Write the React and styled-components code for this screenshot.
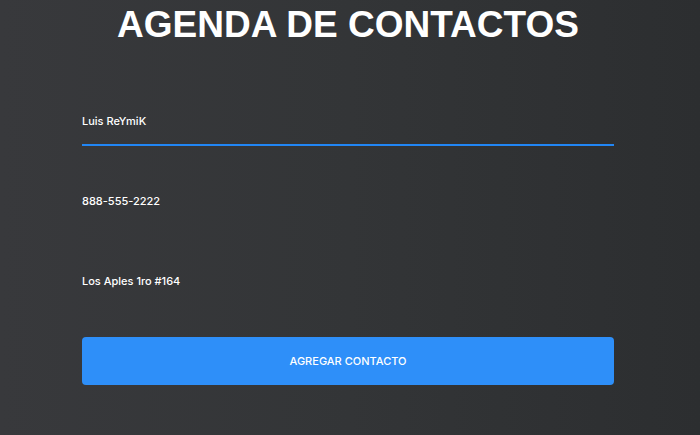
import React, { useState } from 'react'
import styled, { createGlobalStyle } from 'styled-components'

// #region STYLES
const GlobalStyle = createGlobalStyle`
  html, body {
    margin: 0;
    padding: 0;
    height: 100%;
  }
  body {
    background: linear-gradient(90deg, #38393c 0%, #333537 50%, #2c2e30 100%);
    font-family: Inter, "Noto Sans", sans-serif;
    color: #ffffff;
  }
`
const Page = styled.div`
  min-height: 435px;
  padding: 0 4px 0 0;
  box-sizing: border-box;
`
const Title = styled.h1`
  margin: 2px 0 0;
  text-align: center;
  font-family: "Liberation Sans", Arial, sans-serif;
  font-size: 37px;
  line-height: 46px;
  font-weight: 700;
  color: #ffffff;
`
const Form = styled.form`
  width: 532px;
  margin: 50px auto 0;
  display: flex;
  flex-direction: column;
  gap: 32px;
`
const Field = styled.input`
  height: 48px;
  box-sizing: border-box;
  padding: 0;
  background: transparent;
  border: 0;
  border-bottom: 2px solid ${({ $active }) => ($active ? '#2186f5' : 'transparent')};
  outline: none;
  font-family: Inter, "Noto Sans", sans-serif;
  font-size: 11px;
  font-weight: 500;
  color: #ffffff;
`
const SubmitBtn = styled.button`
  margin-top: -1px;
  height: 48px;
  border: 0;
  border-radius: 4px;
  background-color: #2e8ff9;
  font-family: Inter, "Noto Sans", sans-serif;
  font-size: 11px;
  font-weight: 500;
  color: #ffffff;
  text-transform: uppercase;
  cursor: pointer;
`
// #endregion

export default function App() {
  const [name, setName] = useState('Luis ReYmiK')
  const [phone, setPhone] = useState('888-555-2222')
  const [address, setAddress] = useState('Los Aples 1ro #164')

  const handleSubmit = (e) => {
    e.preventDefault()
  }

  return (
    <Page>
      <GlobalStyle />
      <Title>AGENDA DE CONTACTOS</Title>
      <Form onSubmit={handleSubmit}>
        <Field $active value={name} onChange={(e) => setName(e.target.value)} />
        <Field value={phone} onChange={(e) => setPhone(e.target.value)} />
        <Field value={address} onChange={(e) => setAddress(e.target.value)} />
        <SubmitBtn type="submit">Agregar contacto</SubmitBtn>
      </Form>
    </Page>
  )
}
